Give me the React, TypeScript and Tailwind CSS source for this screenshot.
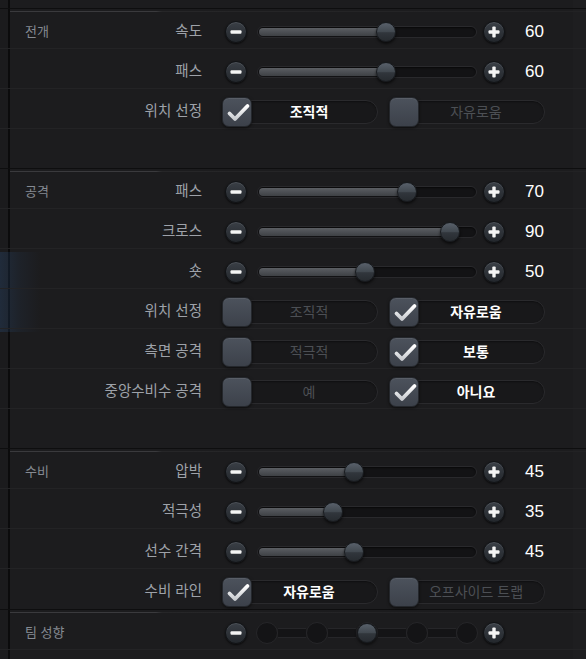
import React from "react"

type SliderRow = { kind: "slider"; label: string; value: number }
type ChoiceRow = { kind: "choice"; label: string; options: [string, string]; selected: 0 | 1 }
type Row = SliderRow | ChoiceRow

type Section = { title: string; rows: Row[]; glow?: number[]; tail: boolean }

const sections: Section[] = [
  {
    title: "전개",
    tail: true,
    rows: [
      { kind: "slider", label: "속도", value: 60 },
      { kind: "slider", label: "패스", value: 60 },
      { kind: "choice", label: "위치 선정", options: ["조직적", "자유로움"], selected: 0 },
    ],
  },
  {
    title: "공격",
    tail: true,
    glow: [2, 3],
    rows: [
      { kind: "slider", label: "패스", value: 70 },
      { kind: "slider", label: "크로스", value: 90 },
      { kind: "slider", label: "숏", value: 50 },
      { kind: "choice", label: "위치 선정", options: ["조직적", "자유로움"], selected: 1 },
      { kind: "choice", label: "측면 공격", options: ["적극적", "보통"], selected: 1 },
      { kind: "choice", label: "중앙수비수 공격", options: ["예", "아니요"], selected: 1 },
    ],
  },
  {
    title: "수비",
    tail: false,
    rows: [
      { kind: "slider", label: "압박", value: 45 },
      { kind: "slider", label: "적극성", value: 35 },
      { kind: "slider", label: "선수 간격", value: 45 },
      { kind: "choice", label: "수비 라인", options: ["자유로움", "오프사이드 트랩"], selected: 0 },
    ],
  },
]

const ROW_LINE =
  "bg-[linear-gradient(to_bottom,transparent_36px,#232325_36px,#232325_37px,transparent_37px)]"

function Divider() {
  return (
    <div className="flex h-[4px] flex-col">
      <div className="h-px bg-[#0e0e0f]" />
      <div className="h-[2px]" />
      <div className="ml-[10px] h-px bg-[linear-gradient(to_right,#3a3a3d_0,#3a3a3d_146px,#262628_152px,#222224_100%)]" />
    </div>
  )
}

function RoundBtn({ plus }: { plus?: boolean }) {
  return (
    <div className="flex h-[22px] w-[22px] shrink-0 items-center justify-center rounded-full border border-[#111316] bg-[linear-gradient(to_bottom,#3a3f46,#23272c)] shadow-[0_1px_2px_rgba(0,0,0,0.7),inset_0_1px_0_rgba(255,255,255,0.1)]">
      <svg width="12" height="12" viewBox="0 0 12 12">
        <rect x="0.5" y="4.3" width="11" height="3.4" rx="1" fill="#f4f4f4" />
        {plus && <rect x="4.3" y="0.5" width="3.4" height="11" rx="1" fill="#f4f4f4" />}
      </svg>
    </div>
  )
}

function Thumb() {
  return (
    <div className="h-[20px] w-[20px] rounded-full border border-[#181b1f] bg-[linear-gradient(to_bottom,#58606a_0%,#424950_48%,#31363c_54%,#272b30_100%)] shadow-[0_2px_3px_rgba(0,0,0,0.65)]" />
  )
}

function Slider({ value }: { value: number }) {
  const pos = 2 + value * 2.12
  return (
    <div className="relative ml-[10px] h-[12px] w-[220px] rounded-full border border-[#29292c] bg-[#131315] shadow-[inset_0_1px_2px_rgba(0,0,0,0.6)]">
      <div
        className="mt-px ml-px h-[8px] rounded-full bg-[linear-gradient(to_bottom,#5b5e63,#3e4145)]"
        style={{ width: pos }}
      />
      <div className="absolute top-1/2 -translate-y-1/2" style={{ left: pos - 11 }}>
        <Thumb />
      </div>
    </div>
  )
}

function Check() {
  return (
    <svg width="30" height="30" viewBox="0 0 30 30">
      <defs>
        <linearGradient id="ck" x1="0" y1="0" x2="0" y2="1">
          <stop offset="0" stopColor="#ffffff" />
          <stop offset="1" stopColor="#c9ccd0" />
        </linearGradient>
      </defs>
      <path d="M6.5 15.5 L12 21 L24.5 8" fill="none" stroke="url(#ck)" strokeWidth="3.8" strokeLinecap="round" strokeLinejoin="round" />
    </svg>
  )
}

function Option({ label, checked }: { label: string; checked: boolean }) {
  return (
    <div className="flex w-[156px] items-center">
      <div className="relative z-10 h-[30px] w-[30px] shrink-0 rounded-[7px] border border-[#24272c] bg-[linear-gradient(to_bottom,#4c525c,#3c414a)] shadow-[0_1px_3px_rgba(0,0,0,0.6),inset_0_1px_0_rgba(255,255,255,0.08)]">
        {checked && <Check />}
      </div>
      <div className="-ml-[12px] flex h-[24px] flex-1 items-center justify-center rounded-full border border-[#2a2a2d] bg-[#18181a] shadow-[inset_0_1px_2px_rgba(0,0,0,0.4)]">
        <span
          className={
            checked
              ? "text-[14px] font-bold text-white"
              : "text-[14px] text-[#4c4f54]"
          }
        >
          {label}
        </span>
      </div>
    </div>
  )
}

function RowView({ title, row, line, tight }: { title?: string; row: Row; line: boolean; tight?: boolean }) {
  return (
    <div className={`flex items-center pl-[25px] ${tight ? "h-[37px] pt-[3px]" : "h-[40px]"} ${line ? ROW_LINE : ""}`}>
      <div className="flex w-[177px] items-center justify-between">
        <span className="text-[13px] text-[#858a92]">{title ?? ""}</span>
        <span className="text-[14.5px] text-[#9ea2a9]">{row.label}</span>
      </div>
      {row.kind === "slider" ? (
        <div className="ml-[23px] flex items-center">
          <RoundBtn />
          <Slider value={row.value} />
          <div className="ml-[6px]">
            <RoundBtn plus />
          </div>
          <span className="ml-[20px] text-[17px] text-white">{row.value}</span>
        </div>
      ) : (
        <div className="ml-[20px] flex items-center gap-[11px]">
          <Option label={row.options[0]} checked={row.selected === 0} />
          <Option label={row.options[1]} checked={row.selected === 1} />
        </div>
      )}
    </div>
  )
}

function SectionView({ s }: { s: Section }) {
  const glow = s.glow ?? []
  const before = s.rows.slice(0, glow[0] ?? s.rows.length)
  const glowRows = glow.length ? s.rows.slice(glow[0], glow[glow.length - 1] + 1) : []
  const after = glow.length ? s.rows.slice(glow[glow.length - 1] + 1) : []
  const n = s.rows.length

  const render = (r: Row, i: number) => {
    const last = i === n - 1
    return (
      <RowView
        key={i}
        title={i === 0 ? s.title : undefined}
        row={r}
        line={s.tail || !last}
        tight={!s.tail && last}
      />
    )
  }

  return (
    <div className="flex flex-col">
      <Divider />
      {before.map((r, i) => render(r, i))}
      {glowRows.length > 0 && (
        <div className="bg-[linear-gradient(to_right,rgba(45,85,135,0.28),rgba(45,85,135,0.1)_20px,transparent_40px)]">
          {glowRows.map((r, i) => render(r, glow[0] + i))}
        </div>
      )}
      {after.map((r, i) => render(r, (glow[glow.length - 1] ?? 0) + 1 + i))}
      {s.tail && <div className="h-[36px]" />}
    </div>
  )
}

function TeamRow() {
  const steps = [0, 1, 2, 3, 4]
  const active = 2
  return (
    <div className={`flex h-[40px] items-center pl-[25px] ${ROW_LINE}`}>
      <div className="flex w-[177px] items-center">
        <span className="text-[13px] text-[#858a92]">팀 성향</span>
      </div>
      <div className="ml-[23px] flex items-center">
        <RoundBtn />
        <div className="ml-[9px] flex w-[222px] items-center">
          {steps.map((k) => (
            <React.Fragment key={k}>
              {k > 0 && <div className="h-[10px] flex-1 border-y border-[#262629] bg-[#141416]" />}
              <div className="flex h-[22px] w-[22px] items-center justify-center rounded-full border border-[#262629] bg-[#141416]">
                {k === active && <Thumb />}
              </div>
            </React.Fragment>
          ))}
        </div>
        <div className="ml-[5px]">
          <RoundBtn plus />
        </div>
      </div>
    </div>
  )
}

export default function App() {
  return (
    <div className="h-[659px] w-[586px] overflow-hidden bg-[linear-gradient(to_right,#1b1b1d_0,#1b1b1d_8px,#0b0b0c_8px,#0b0b0c_10px,#1c1c1e_10px,#1c1c1e_573px,#1e1e20_573px)] font-['Liberation_Sans','Noto_Sans_CJK_KR',sans-serif]">
      <div className="h-[8px]" />
      {sections.map((s) => (
        <SectionView key={s.title} s={s} />
      ))}
      <Divider />
      <TeamRow />
    </div>
  )
}
